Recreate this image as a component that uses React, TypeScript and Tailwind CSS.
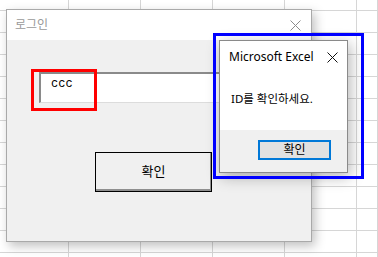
// App — a spreadsheet grid behind a login dialog and an Excel message box,
// with two annotation frames (red around the field, blue around the message box).

const COLS = [69, 72, 72, 72, 72, 21]
const ROWS = [11, 22, 22, 22, 22, 22, 22, 22, 22, 22, 22, 22, 5]

const KR = "font-['Noto_Sans','Noto_Sans_CJK_KR',sans-serif]"

function Sheet() {
  return (
    <div className="flex flex-col">
      {ROWS.map((h, r) => (
        <div key={r} className="flex" style={{ height: h }}>
          {COLS.map((w, c) => (
            <div key={c} className="shrink-0 border-r border-b border-[#d6d6d6]" style={{ width: w }} />
          ))}
        </div>
      ))}
    </div>
  )
}

function CloseX({ color, size = 11 }: { color: string; size?: number }) {
  return (
    <svg width={size} height={size} viewBox="0 0 11 11" className="shrink-0">
      <path d="M0.5 0.5 L10.5 10.5 M10.5 0.5 L0.5 10.5" stroke={color} strokeWidth="1" fill="none" />
    </svg>
  )
}

function LoginWindow() {
  return (
    <div className="absolute left-[6px] top-[9px] flex h-[233px] w-[306px] flex-col border border-[#a9a9a9] bg-[#f0f0f0] shadow-[3px_4px_10px_rgba(0,0,0,0.25)]">
      <div className="flex h-[30px] shrink-0 items-center justify-between bg-white pl-[8px] pr-[10px]">
        <span className={`${KR} text-[12px] text-[#9a9a9a]`}>로그인</span>
        <CloseX color="#8c8c8c" />
      </div>
      <div className="flex flex-col pl-[32px] pt-[32px]">
        <div className="flex h-[31px] w-[220px] items-start border-t-2 border-l-2 border-t-[#8a8a8a] border-l-[#8a8a8a] border-b border-r border-b-[#dcdcdc] border-r-[#dcdcdc] bg-white pt-[3px]">
          <span className="ml-[10px] font-['Liberation_Mono',monospace] text-[12px] leading-[14px] text-black">ccc</span>
        </div>
        <button
          type="button"
          className={`${KR} ml-[56px] mt-[49px] h-[40px] w-[117px] border border-black bg-[#f0f0f0] text-[13px] text-black shadow-[inset_-1px_-2px_0_#8f8f8f]`}
        >
          확인
        </button>
      </div>
    </div>
  )
}

function MessageBox() {
  return (
    <div className="absolute left-[219px] top-[40px] flex h-[133px] w-[129px] flex-col border border-[#8a8a8a] bg-white shadow-[2px_4px_14px_rgba(0,0,0,0.3)]">
      <div className="flex h-[30px] shrink-0 items-center justify-between pl-[9px] pr-[9px] pt-[2px]">
        <span className="font-['Noto_Sans',sans-serif] text-[12px] text-black">Microsoft Excel</span>
        <CloseX color="#111" size={11} />
      </div>
      <div className="flex flex-1 items-start pl-[11px] pt-[19px]">
        <span className={`${KR} text-[11.5px] text-black`}>ID를 확인하세요.</span>
      </div>
      <div className="flex h-[42px] shrink-0 items-start justify-end bg-[#f0f0f0] pr-[16px] pt-[10px]">
        <button
          type="button"
          className={`${KR} h-[20px] w-[73px] border-2 border-[#0078d7] bg-[#e1e1e1] text-[12px] leading-[14px] text-black`}
        >
          확인
        </button>
      </div>
    </div>
  )
}

export default function App() {
  return (
    <div className="relative h-[257px] w-[378px] overflow-hidden bg-white">
      <Sheet />
      <LoginWindow />
      <MessageBox />
      <div className="absolute left-[31px] top-[69px] h-[42px] w-[66px] border-[3px] border-[#ff0000]" />
      <div className="absolute left-[213px] top-[33px] h-[146px] w-[151px] border-[3px] border-[#0000ff]" />
    </div>
  )
}
